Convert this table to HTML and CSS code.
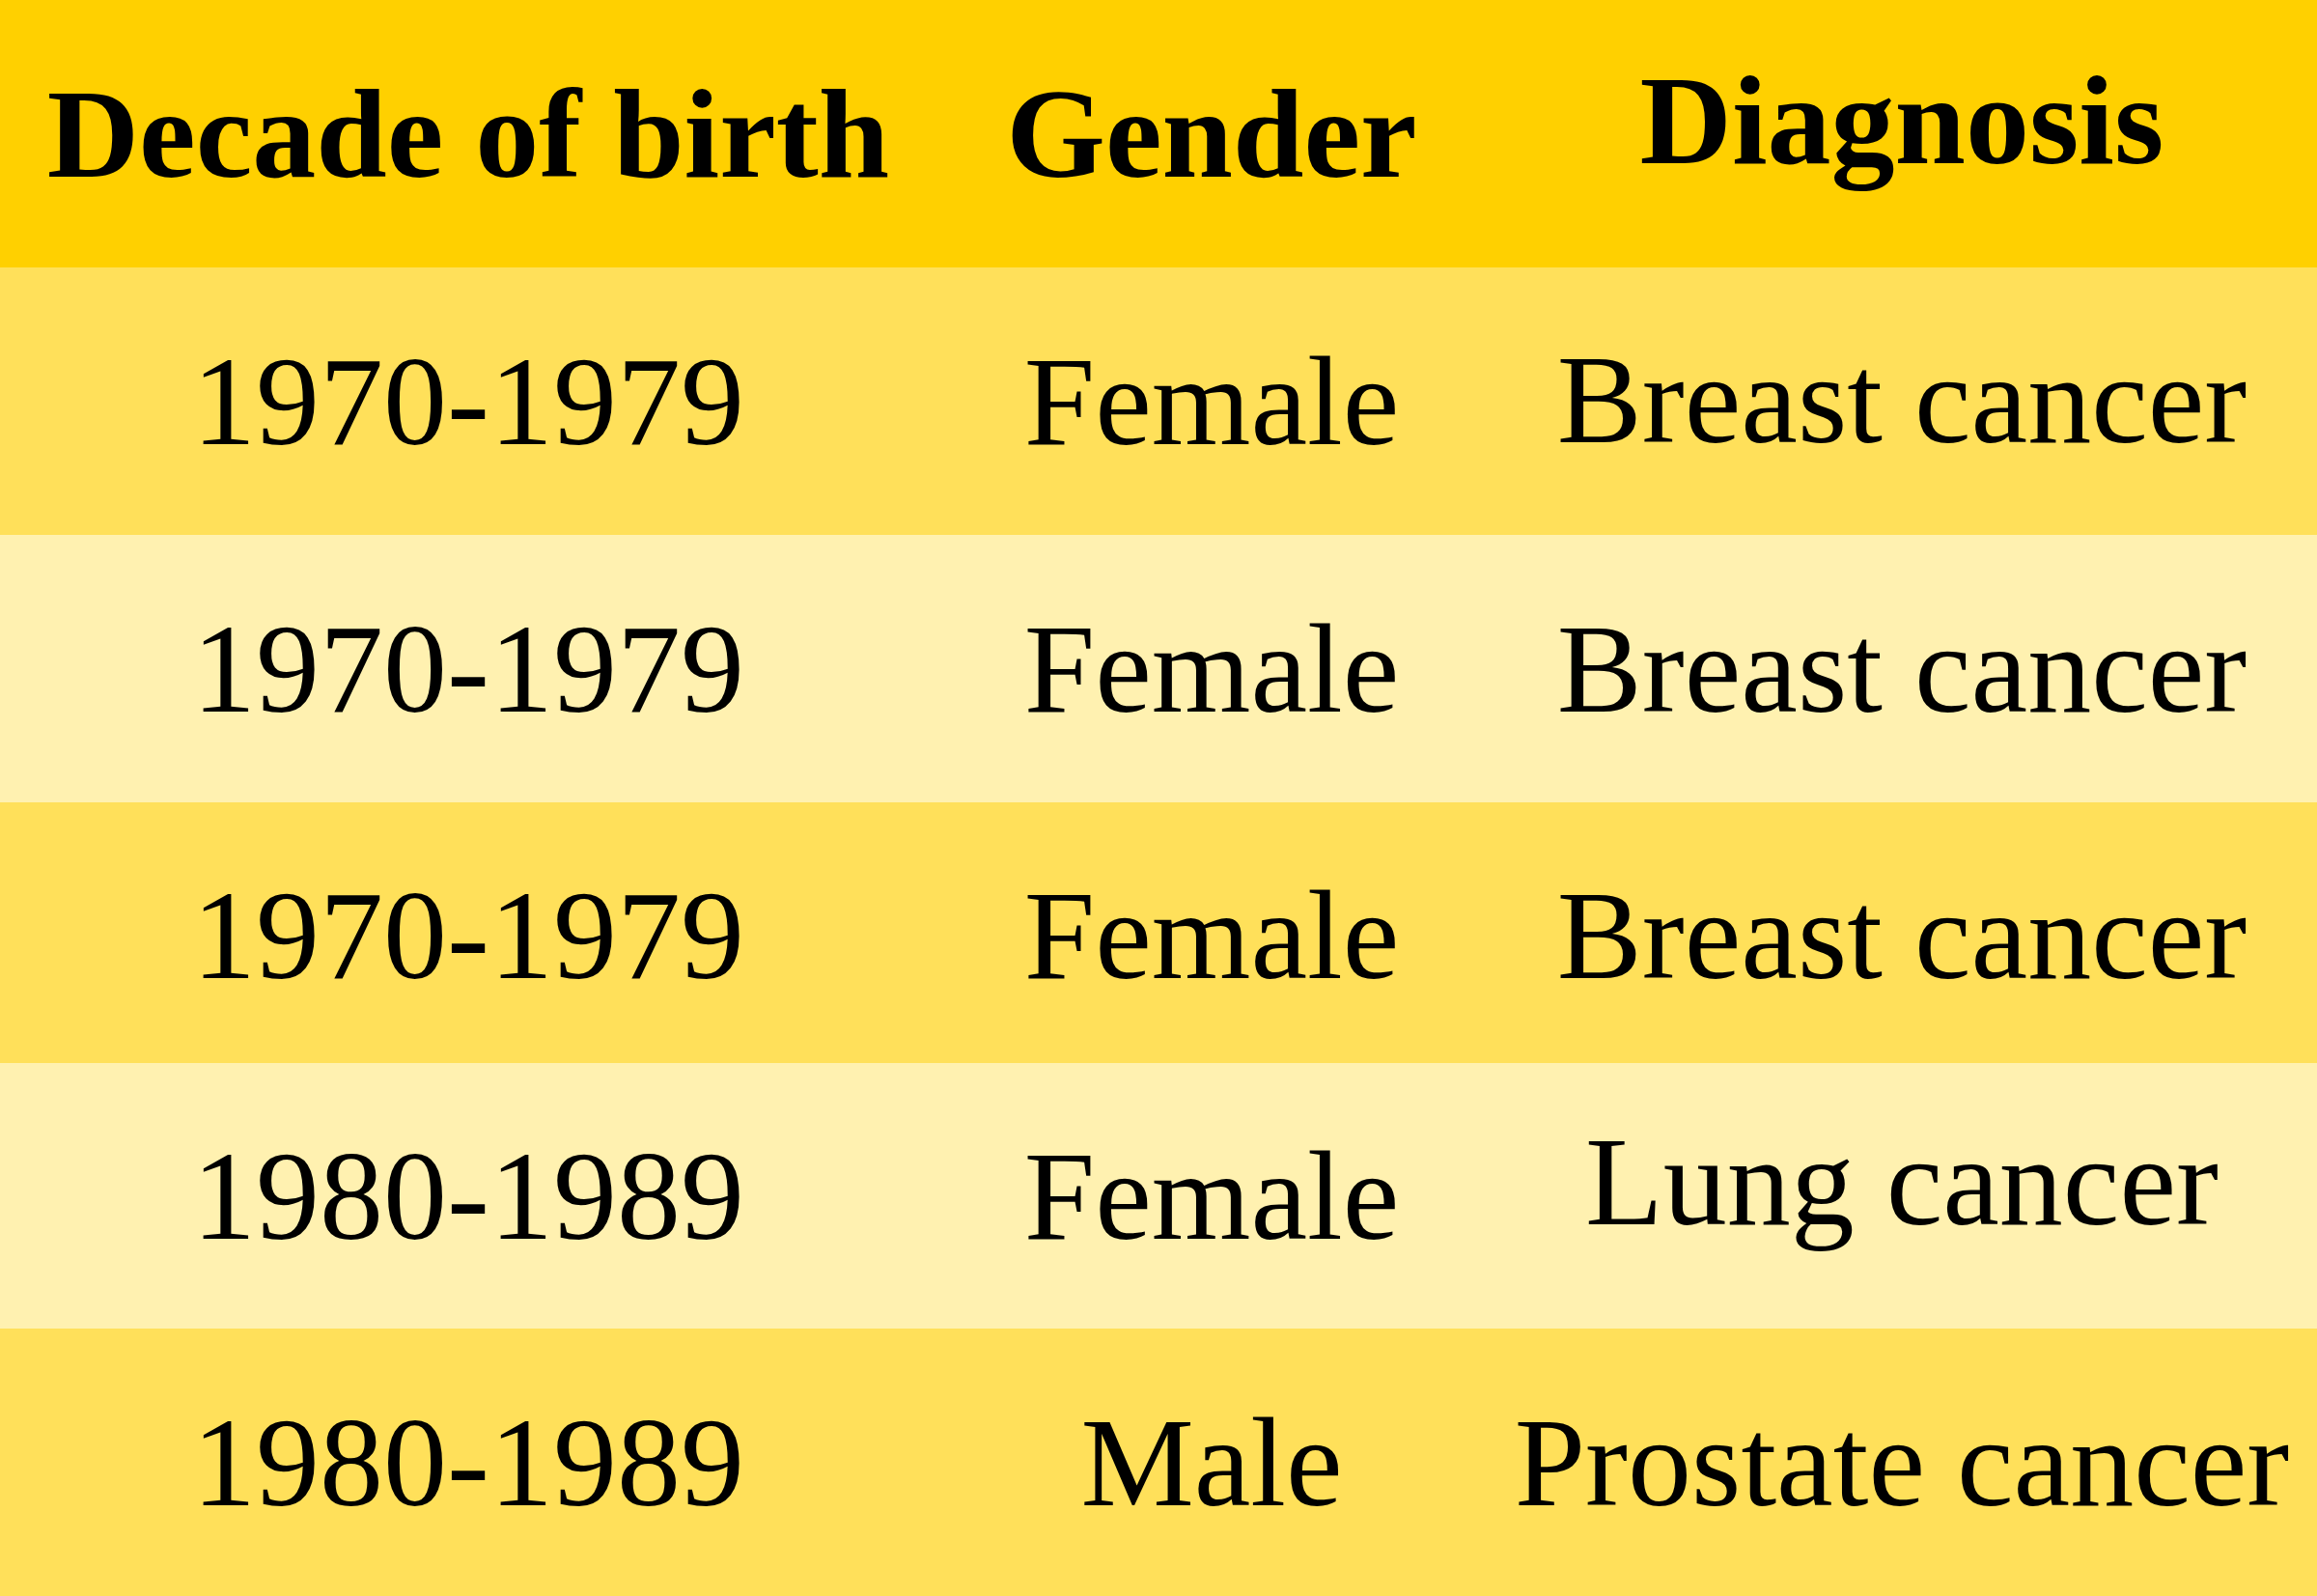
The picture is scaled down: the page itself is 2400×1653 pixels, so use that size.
FILE: index.html
```html
<!DOCTYPE html>
<html lang="en">
<head>
<meta charset="utf-8">
<title>Diagnosis table</title>
<link rel="stylesheet" href="styles.css">
</head>
<body>
<div class="table">
  <div class="row head">
    <div class="cell">Decade of birth</div>
    <div class="cell">Gender</div>
    <div class="cell raise-lg">Diagnosis</div>
  </div>
  <div class="row dark r1">
    <div class="cell">1970-1979</div>
    <div class="cell">Female</div>
    <div class="cell raise-sm">Breast cancer</div>
  </div>
  <div class="row light r2">
    <div class="cell">1970-1979</div>
    <div class="cell">Female</div>
    <div class="cell">Breast cancer</div>
  </div>
  <div class="row dark r3">
    <div class="cell">1970-1979</div>
    <div class="cell">Female</div>
    <div class="cell">Breast cancer</div>
  </div>
  <div class="row light r4">
    <div class="cell">1980-1989</div>
    <div class="cell">Female</div>
    <div class="cell raise-lg2">Lung cancer</div>
  </div>
  <div class="row dark r5">
    <div class="cell">1980-1989</div>
    <div class="cell">Male</div>
    <div class="cell">Prostate cancer</div>
  </div>
</div>
</body>
</html>
```
FILE: styles.css
```css
html, body {
  margin: 0;
  padding: 0;
}
body {
  width: 2400px;
  height: 1653px;
  overflow: hidden;
  background: #ffe05a;
  font-family: "Liberation Serif", "Times New Roman", serif;
  color: #000;
}
.table {
  display: flex;
  flex-direction: column;
  width: 2400px;
}
.row {
  display: grid;
  grid-template-columns: 970px 570px 860px;
  height: 277px;
}
.head {
  background: #ffd000;
  font-weight: bold;
}
.dark {
  background: #ffe05a;
}
.light {
  background: #fff1b0;
}
.r3 {
  height: 270px;
  padding-top: 6px;
  box-sizing: border-box;
}
.r4 {
  height: 275px;
}
.cell {
  display: flex;
  align-items: center;
  justify-content: center;
  font-size: 132px;
  line-height: 1;
  white-space: nowrap;
}
.raise-lg {
  padding-bottom: 27px;
}
.raise-lg2 {
  padding-bottom: 30px;
}
.raise-sm {
  padding-bottom: 4px;
}
```
